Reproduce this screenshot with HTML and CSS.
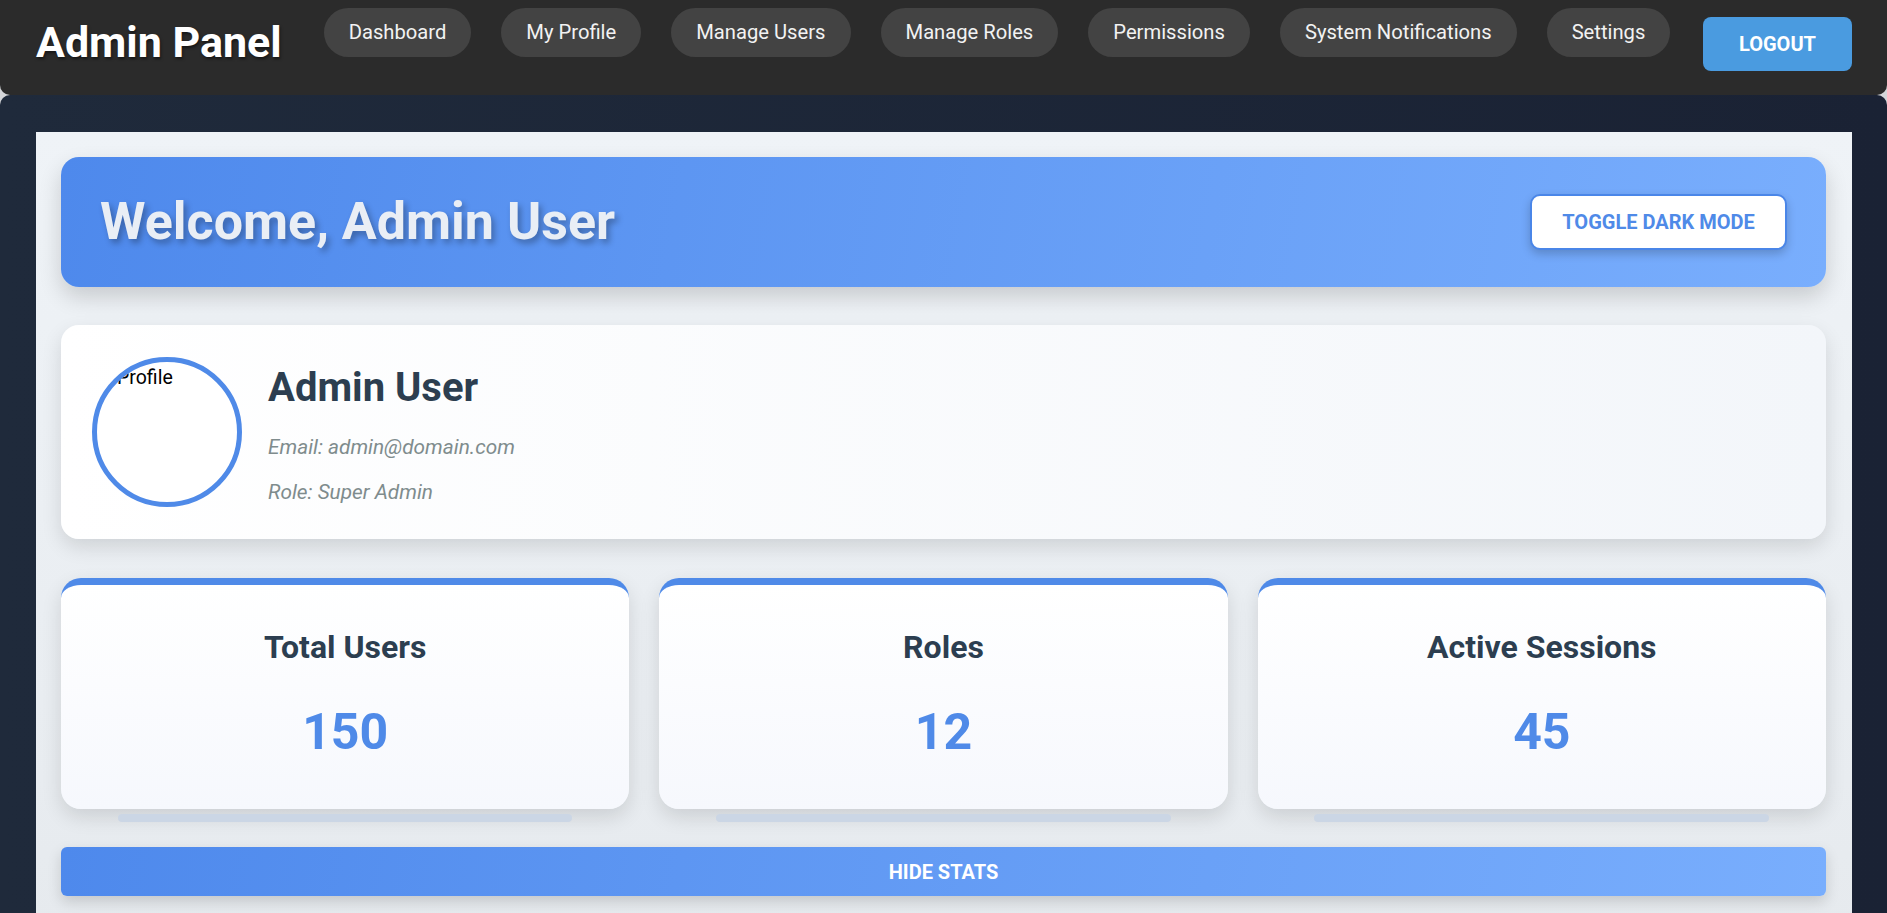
FILE: index.html
```html
<!DOCTYPE html>
<html lang="en">
<head>
<meta charset="utf-8">
<title>Admin Panel</title>
<link rel="stylesheet" href="styles.css">
</head>
<body>
<header class="topbar">
  <h1 class="brand">Admin Panel</h1>
  <nav class="nav">
    <a class="nav-link">Dashboard</a>
    <a class="nav-link">My Profile</a>
    <a class="nav-link">Manage Users</a>
    <a class="nav-link">Manage Roles</a>
    <a class="nav-link">Permissions</a>
    <a class="nav-link">System Notifications</a>
    <a class="nav-link">Settings</a>
  </nav>
  <button class="logout">Logout</button>
</header>
<main class="page">
  <div class="container">
    <section class="welcome">
      <h1 class="welcome-title">Welcome, Admin User</h1>
      <button class="toggle">Toggle Dark Mode</button>
    </section>
    <section class="profile-card">
      <div class="avatar"><span class="avatar-alt">Profile</span></div>
      <div class="profile-info">
        <h2 class="profile-name">Admin User</h2>
        <p class="profile-line">Email: admin@domain.com</p>
        <p class="profile-line">Role: Super Admin</p>
      </div>
    </section>
    <section class="stats">
      <div class="stat">
        <div class="stat-card"><h3 class="stat-title">Total Users</h3><p class="stat-value">150</p></div>
        <div class="stat-bar"></div>
      </div>
      <div class="stat">
        <div class="stat-card"><h3 class="stat-title">Roles</h3><p class="stat-value">12</p></div>
        <div class="stat-bar"></div>
      </div>
      <div class="stat">
        <div class="stat-card"><h3 class="stat-title">Active Sessions</h3><p class="stat-value">45</p></div>
        <div class="stat-bar"></div>
      </div>
    </section>
    <button class="hide-stats">Hide Stats</button>
  </div>
</main>
</body>
</html>
```
FILE: styles.css
```css
html {
  overflow: hidden;
  background: #d4d6d9;
}
body {
  margin: 0;
  font-family: Roboto, "Noto Sans", Arial, sans-serif;
  background: #d4d6d9;
}

/* Top bar */
.topbar {
  display: flex;
  align-items: flex-start;
  height: 95px;
  box-sizing: border-box;
  padding: 0 35px 0 36px;
  background: #2b2b2b;
  border-radius: 0 0 10px 10px;
}
.brand {
  margin: 19px 42px 0 0;
  font-size: 43px;
  line-height: 47px;
  font-weight: 700;
  color: #ffffff;
  text-shadow: 1px 2px 3px rgba(0, 0, 0, 0.5);
  white-space: nowrap;
}
.nav {
  display: flex;
  gap: 30px;
  margin-top: 8px;
  margin-right: auto;
}
.nav-link {
  display: block;
  padding: 13px 25px;
  font-size: 20.2px;
  line-height: 23px;
  color: #f2f2f2;
  background: #434343;
  border-radius: 25px;
  white-space: nowrap;
}
.logout {
  margin-top: 17px;
  width: 149px;
  height: 54px;
  border: none;
  border-radius: 8px;
  background: #4a9be0;
  color: #ffffff;
  font-family: inherit;
  font-size: 20px;
  font-weight: 700;
  text-transform: uppercase;
}

/* Page */
.page {
  padding: 37px 35px 0 36px;
  background: linear-gradient(90deg, #1f2a3b, #1a2234);
  border-radius: 10px 10px 0 0;
  min-height: 900px;
}
.container {
  padding: 25px 26px 25px 25px;
  background: linear-gradient(180deg, #eff3f7, #e9edf1 60%, #e4e8ec);
  min-height: 900px;
}

/* Welcome banner */
.welcome {
  display: flex;
  align-items: center;
  justify-content: space-between;
  padding: 37px 39px;
  border-radius: 18px;
  background: linear-gradient(100deg, #4e89ec, #79aefd);
  box-shadow: 0 10px 22px rgba(0, 0, 0, 0.16);
}
.welcome-title {
  margin: 0;
  font-size: 52px;
  line-height: 56px;
  font-weight: 700;
  color: #e9eef5;
  text-shadow: 3px 4px 6px rgba(0, 0, 0, 0.3);
}
.toggle {
  width: 257px;
  height: 56px;
  border: 2px solid #4a86e8;
  border-radius: 10px;
  background: #ffffff;
  color: #4f8ae8;
  font-family: inherit;
  font-size: 20px;
  font-weight: 700;
  text-transform: uppercase;
  box-shadow: 0 4px 10px rgba(0, 0, 0, 0.2);
}

/* Profile card */
.profile-card {
  display: flex;
  align-items: center;
  gap: 26px;
  margin-top: 38px;
  padding: 32px 31px;
  border-radius: 18px;
  background: linear-gradient(90deg, #ffffff, #f3f6fa);
  box-shadow: 0 8px 20px rgba(0, 0, 0, 0.12);
}
.avatar {
  flex: none;
  width: 140px;
  height: 140px;
  border: 5px solid #4f8ae8;
  border-radius: 50%;
  background: #ffffff;
  overflow: hidden;
}
.avatar-alt {
  display: block;
  padding: 5px 0 0 20px;
  font-size: 19.5px;
  line-height: 22px;
  color: #000000;
}
.profile-info {
  padding-top: 5px;
}
.profile-name {
  margin: 0 0 23px;
  font-size: 40px;
  line-height: 48px;
  font-weight: 700;
  color: #2c3e50;
}
.profile-line {
  margin: 0;
  font-size: 20.8px;
  line-height: 25px;
  font-style: italic;
  color: #7f8c8d;
}
.profile-line + .profile-line {
  margin-top: 20px;
}

/* Stats */
.stats {
  display: grid;
  grid-template-columns: repeat(3, 1fr);
  gap: 30px;
  margin-top: 39px;
}
.stat {
  display: flex;
  flex-direction: column;
  align-items: center;
}
.stat-card {
  align-self: stretch;
  padding: 43px 20px 47px;
  border-top: 7px solid #4f8ae8;
  border-radius: 20px;
  background: linear-gradient(180deg, #ffffff, #f6f8fd);
  box-shadow: 0 8px 20px rgba(0, 0, 0, 0.12);
  text-align: center;
}
.stat-title {
  margin: 0 0 36px;
  font-size: 32px;
  line-height: 38px;
  font-weight: 700;
  color: #2c3e50;
}
.stat-value {
  margin: 0;
  font-size: 50px;
  line-height: 60px;
  font-weight: 700;
  color: #4f8ae8;
}
.stat-bar {
  width: 80%;
  height: 8px;
  margin-top: 5px;
  border-radius: 4px;
  background: #cbd6e5;
}

.hide-stats {
  display: block;
  width: 100%;
  height: 49px;
  margin-top: 25px;
  border: none;
  border-radius: 6px;
  background: linear-gradient(100deg, #4e89ec, #79aefd);
  color: #ffffff;
  font-family: inherit;
  font-size: 20px;
  font-weight: 700;
  text-transform: uppercase;
  box-shadow: 0 6px 14px rgba(0, 0, 0, 0.15);
}
```
